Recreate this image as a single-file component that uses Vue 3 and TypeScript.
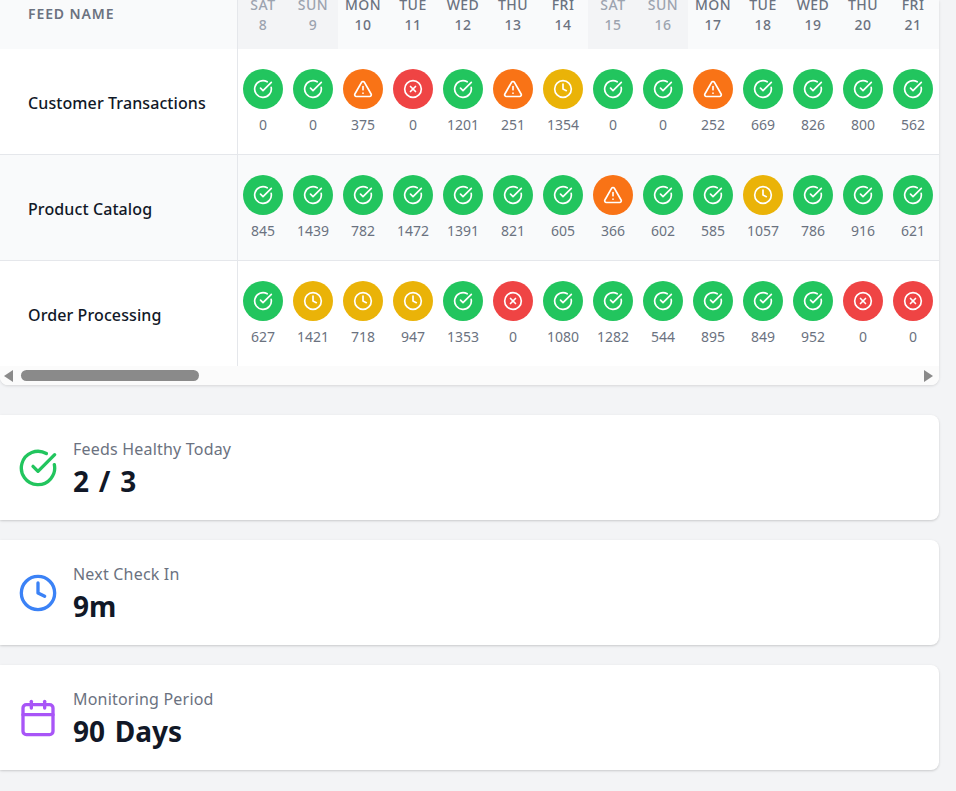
<script setup lang="ts">
type S = 'ok' | 'warn' | 'late' | 'err'
const days = [
  ['SAT', 8, 1], ['SUN', 9, 1], ['MON', 10, 0], ['TUE', 11, 0], ['WED', 12, 0], ['THU', 13, 0], ['FRI', 14, 0],
  ['SAT', 15, 1], ['SUN', 16, 1], ['MON', 17, 0], ['TUE', 18, 0], ['WED', 19, 0], ['THU', 20, 0], ['FRI', 21, 0],
] as const
const rows: { name: string; cells: [S, number][] }[] = [
  { name: 'Customer Transactions', cells: [['ok', 0], ['ok', 0], ['warn', 375], ['err', 0], ['ok', 1201], ['warn', 251], ['late', 1354], ['ok', 0], ['ok', 0], ['warn', 252], ['ok', 669], ['ok', 826], ['ok', 800], ['ok', 562]] },
  { name: 'Product Catalog', cells: [['ok', 845], ['ok', 1439], ['ok', 782], ['ok', 1472], ['ok', 1391], ['ok', 821], ['ok', 605], ['warn', 366], ['ok', 602], ['ok', 585], ['late', 1057], ['ok', 786], ['ok', 916], ['ok', 621]] },
  { name: 'Order Processing', cells: [['ok', 627], ['late', 1421], ['late', 718], ['late', 947], ['ok', 1353], ['err', 0], ['ok', 1080], ['ok', 1282], ['ok', 544], ['ok', 895], ['ok', 849], ['ok', 952], ['err', 0], ['err', 0]] },
]
const stats = [
  { label: 'Feeds Healthy Today', value: '2 / 3', kind: 'ok' },
  { label: 'Next Check In', value: '9m', kind: 'clock' },
  { label: 'Monitoring Period', value: '90 Days', kind: 'cal' },
]
</script>

<template>
  <div class="page">
    <section class="card table-card">
      <div class="head row-grid">
        <div class="name-head"><span>FEED NAME</span></div>
        <div v-for="d in days" :key="d[1]" class="day" :class="{ weekend: d[2] }">
          <span>{{ d[0] }}</span><span>{{ d[1] }}</span>
        </div>
      </div>
      <div v-for="(r, i) in rows" :key="r.name" class="row row-grid" :class="{ alt: i === 1, last: i === 2 }">
        <div class="name">{{ r.name }}</div>
        <div v-for="(c, j) in r.cells" :key="j" class="cell">
          <span class="dot" :class="c[0]">
            <svg viewBox="0 0 24 24" class="ico">
              <template v-if="c[0] === 'ok'"><path d="M21.801 10A10 10 0 1 1 17 3.335" /><path d="m9 11 3 3L22 4" /></template>
              <template v-else-if="c[0] === 'warn'"><path d="m21.73 18-8-14a2 2 0 0 0-3.48 0l-8 14A2 2 0 0 0 4 21h16a2 2 0 0 0 1.73-3" /><path d="M12 9v4" /><path d="M12 17h.01" /></template>
              <template v-else-if="c[0] === 'late'"><circle cx="12" cy="12" r="10" /><polyline points="12 6 12 12 16 14" /></template>
              <template v-else><circle cx="12" cy="12" r="10" /><path d="m15 9-6 6" /><path d="m9 9 6 6" /></template>
            </svg>
          </span>
          <span class="num">{{ c[1] }}</span>
        </div>
      </div>
      <div class="scrollbar">
        <span class="arrow left"></span>
        <span class="thumb"></span>
        <span class="arrow right"></span>
      </div>
    </section>

    <section v-for="s in stats" :key="s.label" class="card stat">
      <svg viewBox="0 0 24 24" class="stat-ico" :class="s.kind">
        <template v-if="s.kind === 'ok'"><path d="M21.801 10A10 10 0 1 1 17 3.335" /><path d="m9 11 3 3L22 4" /></template>
        <template v-else-if="s.kind === 'clock'"><circle cx="12" cy="12" r="10" /><polyline points="12 6 12 12 16 14" /></template>
        <template v-else><path d="M8 2v4" /><path d="M16 2v4" /><rect width="18" height="18" x="3" y="4" rx="2" /><path d="M3 10h18" /></template>
      </svg>
      <div class="stat-text">
        <div class="label">{{ s.label }}</div>
        <div class="value">{{ s.value }}</div>
      </div>
    </section>
  </div>
</template>

<style scoped>
.page {
  height: 791px;
  box-sizing: border-box;
  overflow: hidden;
  padding-right: 17px;
  background: #f3f4f6;
  font-family: "Noto Sans", "Open Sans", sans-serif;
  display: flex;
  flex-direction: column;
  gap: 20px;
}
.card {
  background: #fff;
  border-radius: 0 8px 8px 0;
  box-shadow: 0 1px 3px rgba(0, 0, 0, 0.12), 0 1px 2px rgba(0, 0, 0, 0.06);
  overflow: hidden;
}
.table-card {
  margin-bottom: 10px;
  border-radius: 0 0 8px 8px;
  box-shadow: 0 1px 3px rgba(0, 0, 0, 0.12);
}
.row-grid {
  display: grid;
  grid-template-columns: 238px repeat(14, 50px);
}
.head {
  height: 49px;
  background: #f9fafb;
}
.name-head {
  border-right: 1px solid #e5e7eb;
  padding-left: 28px;
  font-size: 14px;
  font-weight: 600;
  letter-spacing: 0.9px;
  color: #6b7280;
  line-height: 20px;
  padding-top: 4px;
}
.day {
  display: flex;
  flex-direction: column;
  align-items: center;
  justify-content: flex-end;
  padding-bottom: 14px;
  height: 49px;
  box-sizing: border-box;
  font-size: 14px;
  font-weight: 550;
  letter-spacing: 0.5px;
  line-height: 20px;
  color: #6b7280;
  overflow: hidden;
}
.day.weekend {
  background: #f3f4f6;
  color: #9ca3af;
}
.row {
  height: 106px;
  box-sizing: border-box;
  border-bottom: 1px solid #e5e7eb;
}
.row.alt {
  background: #f9fafb;
}
.row.last {
  height: 105px;
  border-bottom: 0;
}
.name {
  display: flex;
  align-items: center;
  padding-left: 28px;
  padding-top: 2px;
  border-right: 1px solid #e5e7eb;
  font-size: 16px;
  font-weight: 550;
  letter-spacing: 0.1px;
  color: #111827;
}
.cell {
  display: flex;
  flex-direction: column;
  align-items: center;
  padding-top: 20px;
  gap: 4px;
}
.dot {
  width: 40px;
  height: 40px;
  border-radius: 50%;
  display: flex;
  align-items: center;
  justify-content: center;
}
.dot.ok { background: #22c55e; }
.dot.warn { background: #f97316; }
.dot.late { background: #eab308; }
.dot.err { background: #ef4444; }
.ico {
  width: 20px;
  height: 20px;
  fill: none;
  stroke: #fff;
  stroke-width: 2;
  stroke-linecap: round;
  stroke-linejoin: round;
}
.num {
  font-size: 14px;
  line-height: 24px;
  color: #6b7280;
}
.scrollbar {
  height: 19px;
  background: #fbfbfb;
  display: flex;
  align-items: center;
  padding: 0 6px 0 4px;
}
.arrow {
  width: 0;
  height: 0;
  border-top: 6.5px solid transparent;
  border-bottom: 6.5px solid transparent;
}
.arrow.left { border-right: 9px solid #8a8a8a; }
.arrow.right { border-left: 9px solid #8a8a8a; margin-left: auto; }
.thumb {
  width: 178px;
  height: 11px;
  border-radius: 6px;
  background: #8a8a8a;
  margin-left: 8px;
}
.stat {
  height: 105px;
  flex: none;
  display: flex;
  align-items: center;
  gap: 15px;
  padding-left: 18px;
}
.stat-ico {
  width: 40px;
  height: 40px;
  fill: none;
  stroke-width: 2;
  stroke-linecap: round;
  stroke-linejoin: round;
}
.stat-ico.ok { stroke: #22c55e; }
.stat-ico.clock { stroke: #3b82f6; }
.stat-ico.cal { stroke: #a855f7; }
.label {
  font-size: 16px;
  letter-spacing: 0.2px;
  line-height: 24px;
  color: #6b7280;
}
.value {
  margin-top: 2px;
  font-size: 28px;
  font-weight: 700;
  word-spacing: 2.5px;
  line-height: 36px;
  color: #111827;
}
</style>
<style>
html, body { margin: 0; background: #f3f4f6; }
</style>
